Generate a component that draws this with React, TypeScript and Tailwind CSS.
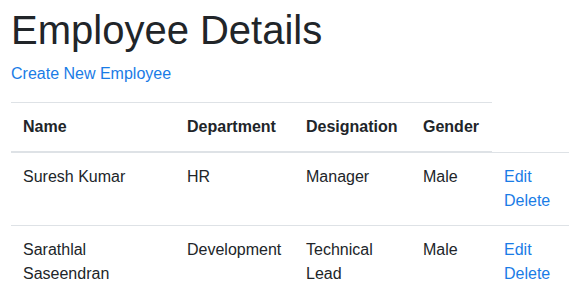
import React from 'react';

type Employee = {
  name: string[];
  department: string;
  designation: string[];
  gender: string;
};

const employees: Employee[] = [
  { name: ['Suresh Kumar'], department: 'HR', designation: ['Manager'], gender: 'Male' },
  { name: ['Sarathlal', 'Saseendran'], department: 'Development', designation: ['Technical', 'Lead'], gender: 'Male' },
];

const EmployeeList: React.FC = () => {
  return (
    <div className="h-screen w-full overflow-hidden bg-white px-[11px] pt-[6px] font-['Liberation_Sans',Arial,sans-serif] text-base leading-6 text-[#212529]">
      <h1 className="mb-2 text-[40px] font-medium leading-[48px]">Employee Details</h1>
      <p className="mb-4">
        <a href="#" className="text-[#1a7ce6]">Create New Employee</a>
      </p>

      <table className="w-[600px] table-fixed border-collapse text-left">
        <colgroup>
          <col className="w-[164px]" />
          <col className="w-[119px]" />
          <col className="w-[117px]" />
          <col className="w-[81px]" />
          <col />
        </colgroup>
        <thead>
          <tr>
            <th className="border-t border-b-2 border-[#dee2e6] p-3 font-bold">Name</th>
            <th className="border-t border-b-2 border-[#dee2e6] p-3 font-bold">Department</th>
            <th className="border-t border-b-2 border-[#dee2e6] p-3 font-bold">Designation</th>
            <th className="border-t border-b-2 border-[#dee2e6] p-3 font-bold">Gender</th>
          </tr>
        </thead>
        <tbody>
          {employees.map((emp) => (
            <tr key={emp.name.join(' ')} className="align-top">
              <td className="border-t border-[#dee2e6] p-3">
                {emp.name.map((n) => (
                  <div key={n}>{n}</div>
                ))}
              </td>
              <td className="border-t border-[#dee2e6] p-3">{emp.department}</td>
              <td className="border-t border-[#dee2e6] p-3">
                {emp.designation.map((d) => (
                  <div key={d}>{d}</div>
                ))}
              </td>
              <td className="border-t border-[#dee2e6] p-3">{emp.gender}</td>
              <td className="border-t border-[#dee2e6] p-3">
                <a href="#" className="block text-[#1a7ce6]">Edit</a>
                <a href="#" className="block text-[#1a7ce6]">Delete</a>
              </td>
            </tr>
          ))}
        </tbody>
      </table>
    </div>
  );
};

export default EmployeeList;
